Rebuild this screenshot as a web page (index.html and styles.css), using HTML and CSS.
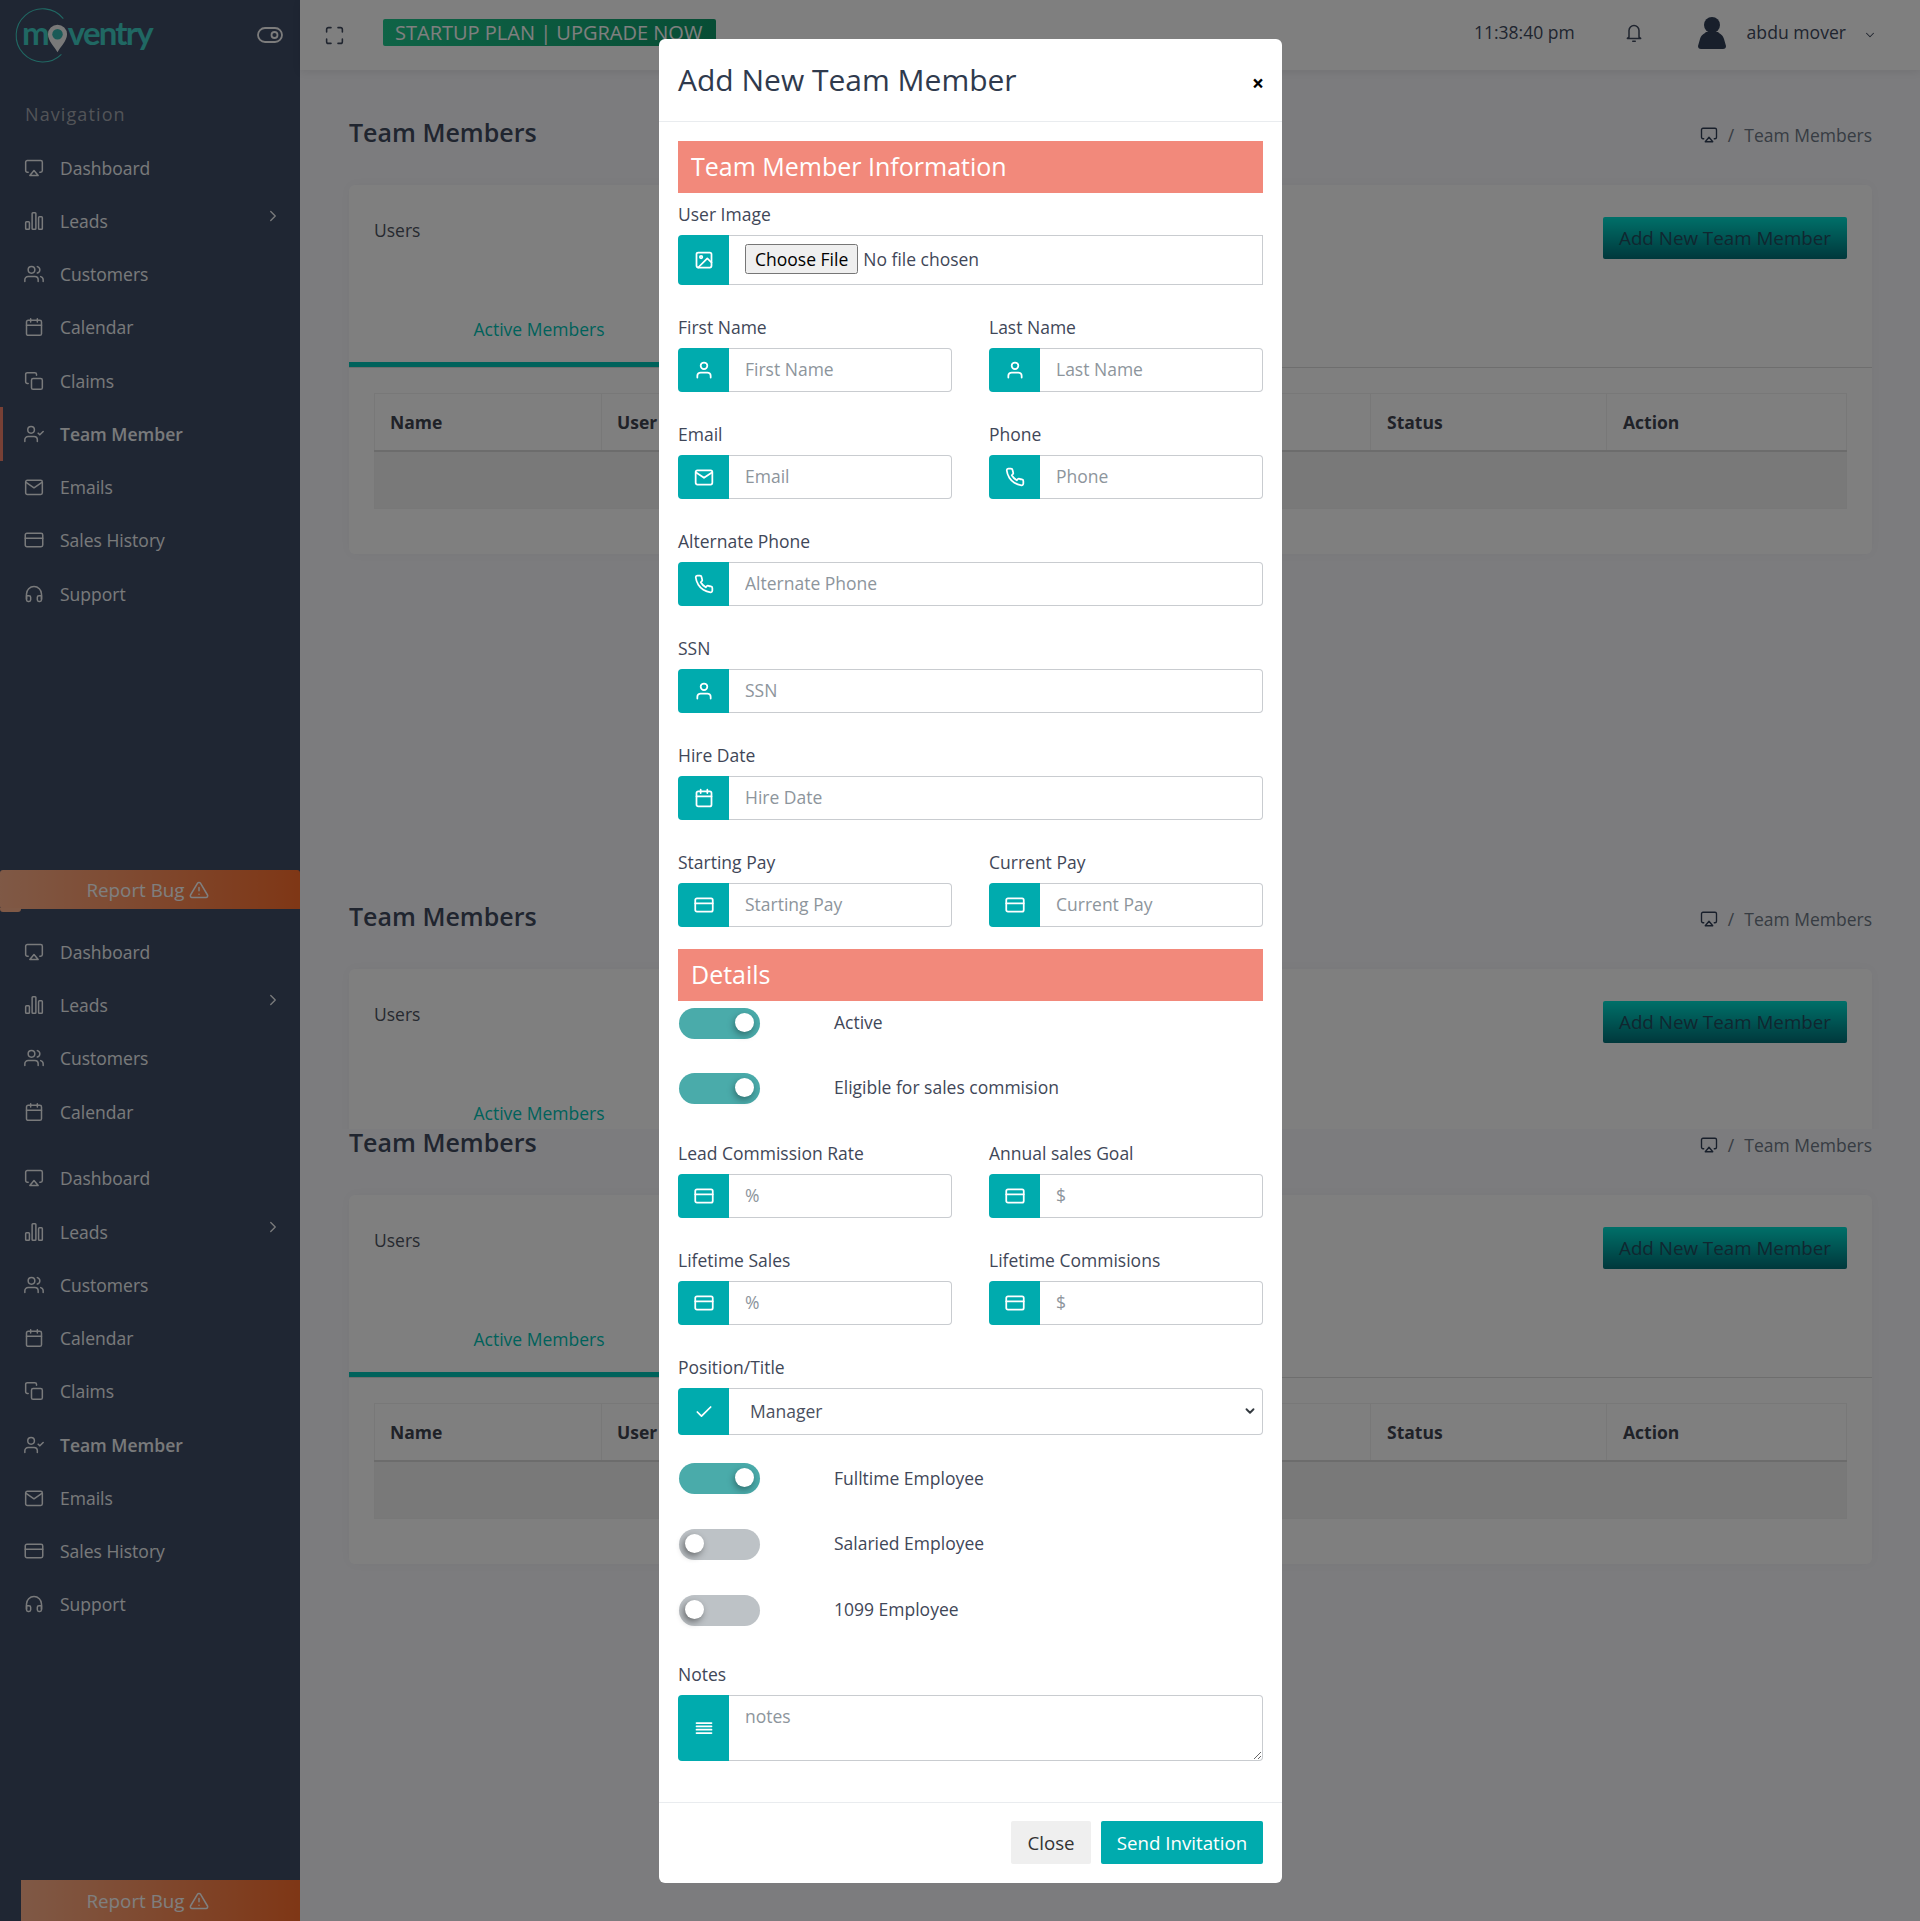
FILE: index.html
```html
<!DOCTYPE html>
<html lang="en">
<head>
<meta charset="utf-8">
<title>Team Members</title>
<link rel="stylesheet" href="styles.css">
</head>
<body>
<svg class="sprite" aria-hidden="true">
  <symbol id="i-airplay" viewBox="0 0 24 24"><path d="M5 17H4a2 2 0 0 1-2-2V5a2 2 0 0 1 2-2h16a2 2 0 0 1 2 2v10a2 2 0 0 1-2 2h-1"/><path d="M12 15l5 6H7z"/></symbol>
  <symbol id="i-bars" viewBox="0 0 24 24"><rect x="2" y="13" width="4.5" height="9" rx="1"/><rect x="9.75" y="2" width="4.5" height="20" rx="1"/><rect x="17.5" y="7" width="4.5" height="15" rx="1"/></symbol>
  <symbol id="i-users" viewBox="0 0 24 24"><path d="M17 21v-2a4 4 0 0 0-4-4H5a4 4 0 0 0-4 4v2"/><circle cx="9" cy="7" r="4"/><path d="M23 21v-2a4 4 0 0 0-3-3.87"/><path d="M16 3.13a4 4 0 0 1 0 7.75"/></symbol>
  <symbol id="i-cal" viewBox="0 0 24 24"><rect x="3" y="4" width="18" height="18" rx="2"/><path d="M16 2v4M8 2v4M3 10h18"/></symbol>
  <symbol id="i-copy" viewBox="0 0 24 24"><rect x="9" y="9" width="13" height="13" rx="2"/><path d="M5 15H4a2 2 0 0 1-2-2V4a2 2 0 0 1 2-2h9a2 2 0 0 1 2 2v1"/></symbol>
  <symbol id="i-ucheck" viewBox="0 0 24 24"><path d="M16 21v-2a4 4 0 0 0-4-4H5a4 4 0 0 0-4 4v2"/><circle cx="8.5" cy="7" r="4"/><path d="M17 11l2 2 4-4"/></symbol>
  <symbol id="i-mail" viewBox="0 0 24 24"><rect x="2" y="4" width="20" height="17" rx="2"/><path d="M2.5 6.5L12 13l9.500-6.500"/></symbol>
  <symbol id="i-card" viewBox="0 0 24 24"><rect x="1.500" y="4" width="21" height="16" rx="2"/><path d="M1.500 10h21"/></symbol>
  <symbol id="i-head" viewBox="0 0 24 24"><path d="M3 18v-6a9 9 0 0 1 18 0v6"/><path d="M21 19a2 2 0 0 1-2 2h-1a2 2 0 0 1-2-2v-3a2 2 0 0 1 2-2h3zM3 19a2 2 0 0 0 2 2h1a2 2 0 0 0 2-2v-3a2 2 0 0 0-2-2H3z"/></symbol>
  <symbol id="i-right" viewBox="0 0 24 24"><path d="M9 18l6-6-6-6"/></symbol>
  <symbol id="i-down" viewBox="0 0 24 24"><path d="M6 9l6 6 6-6"/></symbol>
  <symbol id="i-toggle" viewBox="0 0 26 16"><rect x="1" y="1" width="24" height="14" rx="7"/><circle cx="17.500" cy="8" r="3"/></symbol>
  <symbol id="i-max" viewBox="0 0 24 24"><path d="M8 3H5a2 2 0 0 0-2 2v3M21 8V5a2 2 0 0 0-2-2h-3M3 16v3a2 2 0 0 0 2 2h3M16 21h3a2 2 0 0 0 2-2v-3"/></symbol>
  <symbol id="i-bell" viewBox="0 0 24 24"><path d="M18 17V9A6 6 0 0 0 6 9v8l-2 1.500h16z"/><path d="M10.500 22h3"/></symbol>
  <symbol id="i-alert" viewBox="0 0 24 24"><path d="M10.290 3.860L1.820 18a2 2 0 0 0 1.710 3h16.940a2 2 0 0 0 1.710-3L13.710 3.860a2 2 0 0 0-3.420 0z"/><path d="M12 9v4M12 17h.01"/></symbol>
  <symbol id="i-image" viewBox="0 0 24 24"><rect x="3" y="3" width="18" height="18" rx="2"/><circle cx="8.500" cy="8.500" r="1.500"/><path d="M21 15l-5-5L5 21"/></symbol>
  <symbol id="i-user" viewBox="0 0 24 24"><path d="M20 21v-2a4 4 0 0 0-4-4H8a4 4 0 0 0-4 4v2"/><circle cx="12" cy="7" r="4"/></symbol>
  <symbol id="i-phone" viewBox="0 0 24 24"><path d="M22 16.920v3a2 2 0 0 1-2.180 2 19.790 19.790 0 0 1-8.630-3.070 19.500 19.500 0 0 1-6-6 19.790 19.790 0 0 1-3.070-8.670A2 2 0 0 1 4.110 2h3a2 2 0 0 1 2 1.720c.13.960.36 1.900.7 2.810a2 2 0 0 1-.45 2.110L8.090 9.910a16 16 0 0 0 6 6l1.270-1.270a2 2 0 0 1 2.110-.45c.91.340 1.850.570 2.810.7A2 2 0 0 1 22 16.920z"/></symbol>
  <symbol id="i-check" viewBox="0 0 24 24"><path d="M20 6L9 17l-5-5"/></symbol>
  <symbol id="i-lines" viewBox="0 0 24 24"><path d="M3 6h18M3 10h18M3 14h18M3 18h18"/></symbol>
</svg>

<div class="app">
  <aside class="sidebar">
    <div class="brand">
      <svg class="logo-ring" viewBox="0 0 60 60"><path d="M50 13A27.500 27.500 0 1 0 48 50"/></svg>
      <div class="logo-text"><span>m</span><svg class="logo-pin" viewBox="0 0 22 30"><path class="pin-body" d="M11 30C8 24 1 18 1 11a10 10 0 0 1 20 0c0 7-7 13-10 19z"/><circle class="pin-dot" cx="11" cy="11" r="5.500"/></svg><span>ventry</span></div>
      <svg class="ico brand-toggle"><use href="#i-toggle"/></svg>
    </div>
    <div class="nav-title">Navigation</div>
    <nav class="nav-group">
      <a class="nav-item"><svg class="ico"><use href="#i-airplay"/></svg>Dashboard</a>
      <a class="nav-item"><svg class="ico"><use href="#i-bars"/></svg>Leads<svg class="ico nav-arrow"><use href="#i-right"/></svg></a>
      <a class="nav-item"><svg class="ico"><use href="#i-users"/></svg>Customers</a>
      <a class="nav-item"><svg class="ico"><use href="#i-cal"/></svg>Calendar</a>
      <a class="nav-item"><svg class="ico"><use href="#i-copy"/></svg>Claims</a>
      <a class="nav-item active"><svg class="ico"><use href="#i-ucheck"/></svg>Team Member</a>
      <a class="nav-item"><svg class="ico"><use href="#i-mail"/></svg>Emails</a>
      <a class="nav-item"><svg class="ico"><use href="#i-card"/></svg>Sales History</a>
      <a class="nav-item"><svg class="ico"><use href="#i-head"/></svg>Support</a>
    </nav>
    <div class="report report-first">Report Bug <svg class="ico"><use href="#i-alert"/></svg></div>
    <nav class="nav-group nav-second">
      <a class="nav-item"><svg class="ico"><use href="#i-airplay"/></svg>Dashboard</a>
      <a class="nav-item"><svg class="ico"><use href="#i-bars"/></svg>Leads<svg class="ico nav-arrow"><use href="#i-right"/></svg></a>
      <a class="nav-item"><svg class="ico"><use href="#i-users"/></svg>Customers</a>
      <a class="nav-item"><svg class="ico"><use href="#i-cal"/></svg>Calendar</a>
    </nav>
    <nav class="nav-group nav-third">
      <a class="nav-item"><svg class="ico"><use href="#i-airplay"/></svg>Dashboard</a>
      <a class="nav-item"><svg class="ico"><use href="#i-bars"/></svg>Leads<svg class="ico nav-arrow"><use href="#i-right"/></svg></a>
      <a class="nav-item"><svg class="ico"><use href="#i-users"/></svg>Customers</a>
      <a class="nav-item"><svg class="ico"><use href="#i-cal"/></svg>Calendar</a>
      <a class="nav-item"><svg class="ico"><use href="#i-copy"/></svg>Claims</a>
      <a class="nav-item semi"><svg class="ico"><use href="#i-ucheck"/></svg>Team Member</a>
      <a class="nav-item"><svg class="ico"><use href="#i-mail"/></svg>Emails</a>
      <a class="nav-item"><svg class="ico"><use href="#i-card"/></svg>Sales History</a>
      <a class="nav-item"><svg class="ico"><use href="#i-head"/></svg>Support</a>
    </nav>
    <div class="report report-last">Report Bug <svg class="ico"><use href="#i-alert"/></svg></div>
  </aside>

  <div class="main">
    <header class="topbar">
      <svg class="ico top-max"><use href="#i-max"/></svg>
      <a class="plan">STARTUP PLAN | UPGRADE NOW</a>
      <span class="clock">11:38:40 pm</span>
      <svg class="ico top-bell"><use href="#i-bell"/></svg>
      <svg class="top-avatar" viewBox="0 0 28 32"><circle cx="14" cy="8" r="8"/><path d="M8 15h12c2 2 5 3 6 7l2 7a3 3 0 0 1-3 3H3a3 3 0 0 1-3-3l2-7c1-4 4-5 6-7z"/></svg>
      <span class="uname">abdu mover</span>
      <svg class="ico top-chev"><use href="#i-down"/></svg>
    </header>

    <section class="block block-tall">
      <div class="title-row"><h1>Team Members</h1><div class="crumb"><svg class="ico"><use href="#i-airplay"/></svg><span class="sep">/</span><span>Team Members</span></div></div>
      <div class="card">
        <div class="card-top"><span class="card-label">Users</span><a class="btn-add">Add New Team Member</a></div>
        <div class="tabs"><a class="tab">Active Members</a></div>
        <table class="tbl"><thead><tr><th class="c-name">Name</th><th>User</th><th class="c-status">Status</th><th class="c-action">Action</th></tr></thead><tbody><tr><td colspan="4"></td></tr></tbody></table>
      </div>
    </section>

    <section class="block block-short">
      <div class="title-row"><h1>Team Members</h1><div class="crumb"><svg class="ico"><use href="#i-airplay"/></svg><span class="sep">/</span><span>Team Members</span></div></div>
      <div class="card">
        <div class="card-top"><span class="card-label">Users</span><a class="btn-add">Add New Team Member</a></div>
        <div class="tabs"><a class="tab">Active Members</a></div>
      </div>
    </section>

    <section class="block block-last">
      <div class="title-row"><h1>Team Members</h1><div class="crumb"><svg class="ico"><use href="#i-airplay"/></svg><span class="sep">/</span><span>Team Members</span></div></div>
      <div class="card">
        <div class="card-top"><span class="card-label">Users</span><a class="btn-add">Add New Team Member</a></div>
        <div class="tabs"><a class="tab">Active Members</a></div>
        <table class="tbl"><thead><tr><th class="c-name">Name</th><th>User</th><th class="c-status">Status</th><th class="c-action">Action</th></tr></thead><tbody><tr><td colspan="4"></td></tr></tbody></table>
      </div>
    </section>
  </div>
</div>

<div class="backdrop"></div>

<div class="modal">
  <div class="modal-head"><h2>Add New Team Member</h2><span class="modal-x">×</span></div>
  <form class="modal-body">
    <h3 class="section">Team Member Information</h3>
    <div class="field field-file">
      <label>User Image</label>
      <div class="group group-file"><span class="addon"><svg class="ico"><use href="#i-image"/></svg></span><div class="file-wrap"><input type="file"></div></div>
    </div>
    <div class="pair">
      <div class="field"><label>First Name</label><div class="group"><span class="addon"><svg class="ico"><use href="#i-user"/></svg></span><input type="text" placeholder="First Name"></div></div>
      <div class="field"><label>Last Name</label><div class="group"><span class="addon"><svg class="ico"><use href="#i-user"/></svg></span><input type="text" placeholder="Last Name"></div></div>
    </div>
    <div class="pair">
      <div class="field"><label>Email</label><div class="group"><span class="addon"><svg class="ico"><use href="#i-mail"/></svg></span><input type="text" placeholder="Email"></div></div>
      <div class="field"><label>Phone</label><div class="group"><span class="addon"><svg class="ico"><use href="#i-phone"/></svg></span><input type="text" placeholder="Phone"></div></div>
    </div>
    <div class="field"><label>Alternate Phone</label><div class="group"><span class="addon"><svg class="ico"><use href="#i-phone"/></svg></span><input type="text" placeholder="Alternate Phone"></div></div>
    <div class="field"><label>SSN</label><div class="group"><span class="addon"><svg class="ico"><use href="#i-user"/></svg></span><input type="text" placeholder="SSN"></div></div>
    <div class="field"><label>Hire Date</label><div class="group"><span class="addon"><svg class="ico"><use href="#i-cal"/></svg></span><input type="text" placeholder="Hire Date"></div></div>
    <div class="pair">
      <div class="field"><label>Starting Pay</label><div class="group"><span class="addon"><svg class="ico"><use href="#i-card"/></svg></span><input type="text" placeholder="Starting Pay"></div></div>
      <div class="field"><label>Current Pay</label><div class="group"><span class="addon"><svg class="ico"><use href="#i-card"/></svg></span><input type="text" placeholder="Current Pay"></div></div>
    </div>

    <h3 class="section section-details">Details</h3>
    <div class="switch-row"><span class="switch on"></span><span class="switch-text">Active</span></div>
    <div class="switch-row"><span class="switch on"></span><span class="switch-text">Eligible for sales commision</span></div>
    <div class="pair pair-after-switch">
      <div class="field"><label>Lead Commission Rate</label><div class="group"><span class="addon"><svg class="ico"><use href="#i-card"/></svg></span><input type="text" placeholder="%"></div></div>
      <div class="field"><label>Annual sales Goal</label><div class="group"><span class="addon"><svg class="ico"><use href="#i-card"/></svg></span><input type="text" placeholder="$"></div></div>
    </div>
    <div class="pair">
      <div class="field"><label>Lifetime Sales</label><div class="group"><span class="addon"><svg class="ico"><use href="#i-card"/></svg></span><input type="text" placeholder="%"></div></div>
      <div class="field"><label>Lifetime Commisions</label><div class="group"><span class="addon"><svg class="ico"><use href="#i-card"/></svg></span><input type="text" placeholder="$"></div></div>
    </div>
    <div class="field field-select"><label>Position/Title</label><div class="group group-select"><span class="addon"><svg class="ico"><use href="#i-check"/></svg></span><select><option>Manager</option></select><svg class="ico select-arrow"><use href="#i-down"/></svg></div></div>
    <div class="switch-row row-b"><span class="switch on"></span><span class="switch-text">Fulltime Employee</span></div>
    <div class="switch-row row-b"><span class="switch"></span><span class="switch-text">Salaried Employee</span></div>
    <div class="switch-row row-b row-end"><span class="switch"></span><span class="switch-text">1099 Employee</span></div>
    <div class="field field-notes"><label>Notes</label><div class="group group-notes"><span class="addon"><svg class="ico"><use href="#i-lines"/></svg></span><textarea placeholder="notes"></textarea></div></div>
  </form>
  <div class="modal-foot"><button class="btn-close" type="button">Close</button><button class="btn-send" type="button">Send Invitation</button></div>
</div>
</body>
</html>
```

FILE: styles.css
```css
* { box-sizing: border-box; }
html, body { margin: 0; padding: 0; }
body {
  height: 1921px;
  overflow: hidden;
  position: relative;
  background: #f8f8fc;
  font-family: "Open Sans", "Liberation Sans", sans-serif;
  font-size: 16px;
  color: #404a5e;
}
.sprite { display: none; }
.ico {
  width: 20px;
  height: 20px;
  fill: none;
  stroke: currentColor;
  stroke-width: 1.8;
  stroke-linecap: round;
  stroke-linejoin: round;
  flex: none;
}
.app { display: grid; grid-template-columns: 300px 1fr; height: 1921px; }

/* sidebar */
.sidebar { background: #3e4c66; color: #f2f4f7; height: 1921px; overflow: hidden; }
.brand { height: 70px; position: relative; }
.logo-ring { position: absolute; left: 15px; top: 6px; width: 58px; height: 58px; fill: none; stroke: #40d0c6; stroke-width: 1.1; }
.logo-text {
  position: absolute; left: 22px; top: 10px;
  display: flex; align-items: flex-start;
  font-family: "Lato", sans-serif; font-weight: 700; font-size: 33px; line-height: 44px;
  letter-spacing: -1.800px; color: #40d0c6;
}
.logo-pin { width: 21px; height: 30px; margin: 13px 0 0 -1px; flex: none; }
.pin-body { fill: #f2f2f2; }
.pin-dot { fill: #35b5ae; }
.brand-toggle { position: absolute; left: 257px; top: 27px; width: 26px; height: 16px; color: #f8f8f8; }
.nav-title { margin: 32px 0 0 25px; height: 24px; line-height: 24px; font-size: 18px; letter-spacing: 1.1px; color: #a4a8b0; }
.nav-group { margin-top: 15.100px; }
.nav-item { display: flex; align-items: center; height: 53.25px; padding-left: 24px; font-size: 17.500px; position: relative; }
.nav-item .ico { margin-right: 16px; }
.nav-item.active, .nav-item.semi { font-weight: 600; }
.nav-item.active::before { content: ""; position: absolute; left: 0; top: 0; bottom: 0; width: 3px; background: #f0806a; }
.nav-item .nav-arrow { position: absolute; right: 18px; top: 13px; width: 18px; height: 18px; margin: 0; }
.report {
  display: flex; align-items: center; justify-content: center; gap: 5px;
  height: 39px; padding-right: 5px; font-size: 18.800px; color: #fff;
  background: linear-gradient(90deg, #ffb28c, #fe6e2c);
  position: relative;
}
.report .ico { width: 20px; height: 20px; margin-left: -1px; }
.report-first { margin-top: 250.100px; border-radius: 3px 3px 0 3px; }
.report-first::after { content: ""; position: absolute; left: 0; top: 100%; margin-top: -1px; width: 21px; height: 4px; background: #ffb28c; border-radius: 0 0 3px 3px; }
.nav-second { margin-top: 15.700px; }
.nav-third { margin-top: 13.500px; }
.report-last { margin: 249.500px 0 0 21px; height: 41px; background: linear-gradient(90deg, #ffb28c, #fe6e2c); padding-right: 26px; }

/* top bar and page */
.main { min-width: 0; }
.topbar { height: 70px; background: #fff; display: flex; align-items: center; box-shadow: 0 2px 8px rgba(0,0,0,.08); position: relative; color: #404a5e; }
.top-max { width: 21px; height: 21px; margin-left: 24px; }
.plan { margin-left: 38px; margin-top: -5px; height: 27px; width: 333px; padding-left: 12px; line-height: 27px; border-radius: 2px; font-size: 20px; white-space: nowrap; color: #fff; background: linear-gradient(90deg, #1ec88e, #0f9a6a); }
.clock { margin-left: auto; margin-top: -6px; font-size: 17.500px; }
.top-bell { margin-left: 49px; margin-top: -4px; width: 20px; height: 20px; }
.top-avatar { margin-left: 54px; margin-top: -4px; width: 28px; height: 32px; fill: #303f57; }
.uname { margin-left: 21px; font-size: 17.600px; margin-top: -6px; }
.top-chev { margin: -1px 43px 0 17px; width: 14px; height: 14px; }

.block { padding: 49px 48px 0 49px; }
.block-tall { height: 827px; }
.block-short { height: 232px; padding-top: 6px; overflow: hidden; }
.block-last { padding-top: 0; }
.title-row { display: flex; justify-content: space-between; align-items: center; height: 30px; margin-bottom: 36px; }
h1 { margin: -4px 0 0; line-height: 30px; font-size: 25px; font-weight: 600; color: #404a5e; }
.crumb { display: flex; align-items: center; font-size: 17.500px; color: #6f7886; margin-top: 2px; }
.crumb .ico { width: 18px; height: 18px; color: #303f57; }
.crumb .sep { margin: 0 10px; }
.card { background: #fff; border-radius: 6px; height: 369px; box-shadow: 0 0 12px rgba(0,0,0,.03); }
.card-top { display: flex; justify-content: space-between; align-items: flex-start; padding: 32px 25px 0; height: 74px; }
.card-label { font-size: 17.500px; line-height: 26px; color: #4d5360; }
.btn-add { height: 42px; width: 244px; line-height: 42px; text-align: center; font-size: 18.800px; border-radius: 2px; color: #204e60; background: linear-gradient(180deg, #00e0d2, #007078); }
.tabs { border-bottom: 1px solid #ddd; height: 109px; position: relative; }
.tab { position: absolute; left: 0; bottom: 0; height: 74px; width: 380px; text-align: center; padding-top: 24px; line-height: 24px; font-size: 17.500px; color: #00c4b6; border-bottom: 5px solid #00c4b6; }
.tbl { width: calc(100% - 50px); margin: 25px 25px 0; border-collapse: collapse; table-layout: fixed; }
.tbl th { height: 57px; border: 1px solid #f0f0f0; border-bottom: 2px solid #d8d8d8; text-align: left; padding: 0 15px; font-size: 17.500px; font-weight: 700; color: #404450; }
.tbl td { height: 58px; background: #f2f2f2; border: 1px solid #f0f0f0; }
.c-name { width: 227px; }
.tbl .c-status { width: 236px; padding-left: 16px; }
.tbl .c-action { width: 240px; padding-left: 16px; }

.backdrop { position: fixed; inset: 0; background: rgba(0,0,0,.5); }

/* modal */
.modal { position: absolute; left: 659px; top: 39px; width: 623px; height: 1844px; background: #fff; border-radius: 6px; color: #3f4758; }
.modal-head { height: 83px; border-bottom: 1px solid #e9ecef; display: flex; align-items: center; justify-content: space-between; padding: 0 18px 0 19px; }
.modal-head h2 { margin: -2px 0 0; font-size: 30px; font-weight: 400; color: #2f3a4d; }
.modal-x { font-size: 21px; font-weight: 700; color: #000; margin-top: 5px; }
.modal-body { padding: 19px 19px 41px; margin: 0; }
.section { margin: 0 0 9px; height: 52px; line-height: 50px; padding-left: 13px; background: #f2897b; color: #fff; font-size: 25px; font-weight: 500; }
.section-details { margin-top: -8px; margin-bottom: 7px; }
.field { margin-bottom: 30px; min-width: 0; }
.field label { display: block; height: 24px; line-height: 25px; margin-bottom: 9px; font-size: 17.500px; }
.pair { display: grid; grid-template-columns: minmax(0, 1fr) minmax(0, 1fr); column-gap: 37px; }
.group { display: flex; height: 44px; }
.addon { width: 51px; flex: none; background: #00abae; color: #fff; border-radius: 4px 0 0 4px; display: flex; align-items: center; justify-content: center; }
.addon .ico { stroke-width: 2.1; }
.group input[type=text], .group select, .group textarea {
  flex: 1; min-width: 0; border: 1px solid #c9ccd0; border-left: 0; border-radius: 0 4px 4px 0; background: #fff;
  padding: 0 0 2px 16px; font: 17.500px "Open Sans", sans-serif; color: #4a5060; outline: none;
}
.group input::placeholder, .group textarea::placeholder { color: #8d959c; opacity: 1; }
.group-file { height: 50px; }
.file-wrap { flex: 1; border: 1px solid #c9ccd0; border-left: 0; display: flex; align-items: center; padding-left: 16px; }
.file-wrap input { font: 17.500px "Open Sans", sans-serif; color: #3f4758; margin-top: -2px; }
.file-wrap input::file-selector-button { font: inherit; padding: 1px 8px; margin-right: 5px; }
.group-select { height: 47px; position: relative; }
.group .sel, .group-select select { padding-left: 21px; appearance: none; }
.select-arrow { position: absolute; right: 6px; top: 16px; width: 14px; height: 14px; stroke-width: 3.2; color: #343a40; pointer-events: none; }
.group-notes { height: 66px; }
.group-notes .addon { align-self: stretch; }
.group-notes textarea { padding-top: 8px; resize: vertical; height: 66px; line-height: 24px; }
.switch-row { display: flex; align-items: center; height: 31px; margin-bottom: 34px; padding-left: 1px; }
.row-b { margin-bottom: 35px; }
.row-end { margin-bottom: 36px; }
.field-select { margin-bottom: 28px; }
.pair-after-switch { margin-top: 37px; }
.switch { position: relative; width: 81px; height: 31px; border-radius: 16px; background: #bdc2c6; flex: none; }
.switch::after { content: ""; position: absolute; left: 6px; top: 5px; width: 19px; height: 19px; border-radius: 50%; background: #fff; box-shadow: -2px 3px 7px rgba(0,0,0,.45); }
.switch.on { background: #4aabaa; }
.switch.on::after { left: 56px; box-shadow: -1px 3px 7px rgba(0,0,0,.35); }
.switch-text { margin-left: 74px; font-size: 17.500px; position: relative; top: -2px; }
.row-b .switch-text { top: -1px; }
.row-b + .row-b .switch-text { top: -2px; }
.field-notes { margin-bottom: 0; }
.modal-foot { border-top: 1px solid #e9ecef; height: 81px; padding: 18px 19px 0; display: flex; justify-content: flex-end; gap: 10px; align-items: flex-start; }
.modal-foot button { height: 43px; border: 0; border-radius: 2px; font: 18.700px "Open Sans", sans-serif; }
.btn-close { width: 80px; background: #efefef; color: #333; }
.btn-send { width: 162px; background: #00abae; color: #fff; font-weight: 500; }
```
